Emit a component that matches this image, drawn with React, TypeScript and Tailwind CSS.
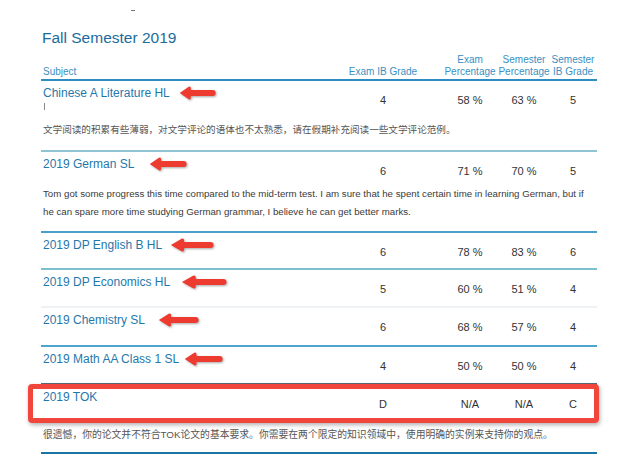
import React from 'react';

interface Arrow {
  ml: number;
  w: number;
}

interface RowProps {
  name: string;
  values: string[];
  arrow?: Arrow;
  mark?: boolean;
  comment?: React.ReactNode;
  commentClass?: string;
  rowClass: string;
  highlight?: boolean;
}

const cols = 'grid grid-cols-[284px_116px_58px_50px_48px]';

const RedArrow = ({ ml, w }: Arrow) => (
  <svg
    viewBox="0 0 40 14"
    preserveAspectRatio="none"
    className="h-[14px] shrink-0 drop-shadow-[1px_1px_1px_rgba(0,0,0,0.35)]"
    style={{ marginLeft: ml, width: w }}
  >
    <path
      d="M0.8 7 L10.5 0.8 Q12.8 -0.2 12.8 2.4 L12.8 4 L36.6 4 Q39.6 4 39.6 7 Q39.6 10 36.6 10 L12.8 10 L12.8 11.6 Q12.8 14.2 10.5 13.2 Z"
      fill="#ee3b30"
    />
  </svg>
);

const Row = ({ name, values, arrow, mark, comment, commentClass, rowClass, highlight }: RowProps) => (
  <div className={`relative pt-[5px] ${rowClass}`}>
    {highlight && (
      <div className="absolute top-[-1px] left-[-13px] right-[-2px] h-[39px] border-[5px] border-[#f0463b] rounded-[4px] shadow-[1px_2px_4px_rgba(0,0,0,0.3)]" />
    )}
    <div className={`${cols} h-[28px]`}>
      <div className="flex flex-col pl-[2px]">
        <div className="flex items-center h-[14px]">
          <span className="text-[12px] leading-[14px] text-[#1f78ab] whitespace-nowrap">{name}</span>
          {arrow && <RedArrow {...arrow} />}
        </div>
        {mark && <div className="mt-[3px] ml-[1px] w-px h-[7px] bg-[#8a8a8a]" />}
      </div>
      {values.map((v, i) => (
        <div key={i} className="flex items-center justify-center text-[11px] text-[#333]">
          {v}
        </div>
      ))}
    </div>
    {comment && (
      <p className={`pl-[2px] leading-[18px] text-[#3a3a3a] ${commentClass ?? ''}`}>
        {comment}
      </p>
    )}
  </div>
);

const Header = ({ top, bottom }: { top?: string; bottom: string }) => (
  <div className="flex flex-col items-center whitespace-nowrap">
    {top && <span>{top}</span>}
    <span>{bottom}</span>
  </div>
);

export default function App() {
  return (
    <div className="min-h-screen bg-white font-['Liberation_Sans','Noto_Sans_CJK_SC',sans-serif]">
      <div className="pl-[41px] pr-[29px]">
        <div className="ml-[90px] pt-[10px] h-[11px]">
          <div className="w-[4px] h-[1px] bg-[#777]" />
        </div>
        <h1 className="mt-[17px] pl-[1px] text-[15.5px] leading-5 text-[#1b6c9c]">Fall Semester 2019</h1>

        <div className={`${cols} mt-[6px] items-end text-[10px] leading-[12px] text-[#3a8fc2] pb-[1px] border-b-2 border-[#2d8cc0]`}>
          <span className="pl-[2px]">Subject</span>
          <Header bottom="Exam IB Grade" />
          <Header top="Exam" bottom="Percentage" />
          <Header top="Semester" bottom="Percentage" />
          <Header top="Semester" bottom="IB Grade" />
        </div>

        <Row
          name="Chinese A Literature HL"
          values={['4', '58 %', '63 %', '5']}
          arrow={{ ml: 9, w: 37 }}
          mark
          comment="文学阅读的积累有些薄弱，对文学评论的语体也不太熟悉，请在假期补充阅读一些文学评论范例。"
          commentClass="mt-[7px] pb-[11px] text-[9.6px] text-[#555]"
          rowClass="border-b-2 border-[#8fc4d4]"
        />
        <Row
          name="2019 German SL"
          values={['6', '71 %', '70 %', '5']}
          arrow={{ ml: 15, w: 38 }}
          comment={
            <>
              Tom got some progress this time compared to the mid-term test. I am sure that he spent certain time in learning German, but if
              <br />
              he can spare more time studying German grammar, I believe he can get better marks.
            </>
          }
          commentClass="pb-[10px] text-[9.7px] whitespace-nowrap"
          rowClass="border-b-2 border-[#4a9fcd]"
        />
        <Row
          name="2019 DP English B HL"
          values={['6', '78 %', '83 %', '6']}
          arrow={{ ml: 8, w: 44 }}
          rowClass="pb-[2px] border-b-2 border-[#7cbfcd]"
        />
        <Row
          name="2019 DP Economics HL"
          values={['5', '60 %', '51 %', '4']}
          arrow={{ ml: 11, w: 46 }}
          rowClass="pb-[3px] border-b-2 border-[#eef2f4]"
        />
        <Row
          name="2019 Chemistry SL"
          values={['6', '68 %', '57 %', '4']}
          arrow={{ ml: 13, w: 41 }}
          rowClass="pb-[4px] border-b-2 border-[#4ba5cc]"
        />
        <Row
          name="2019 Math AA Class 1 SL"
          values={['4', '50 %', '50 %', '4']}
          arrow={{ ml: 5, w: 39 }}
          rowClass="pb-[3px] border-b-2 border-[#5a6b78]"
        />
        <Row
          name="2019 TOK"
          values={['D', 'N/A', 'N/A', 'C']}
          highlight
          comment="很遗憾，你的论文并不符合TOK论文的基本要求。你需要在两个限定的知识领域中，使用明确的实例来支持你的观点。"
          commentClass="mt-[8px] pb-[8px] text-[9.8px] text-[#555]"
          rowClass="border-b-2 border-[#1d73a5]"
        />
      </div>
    </div>
  );
}
